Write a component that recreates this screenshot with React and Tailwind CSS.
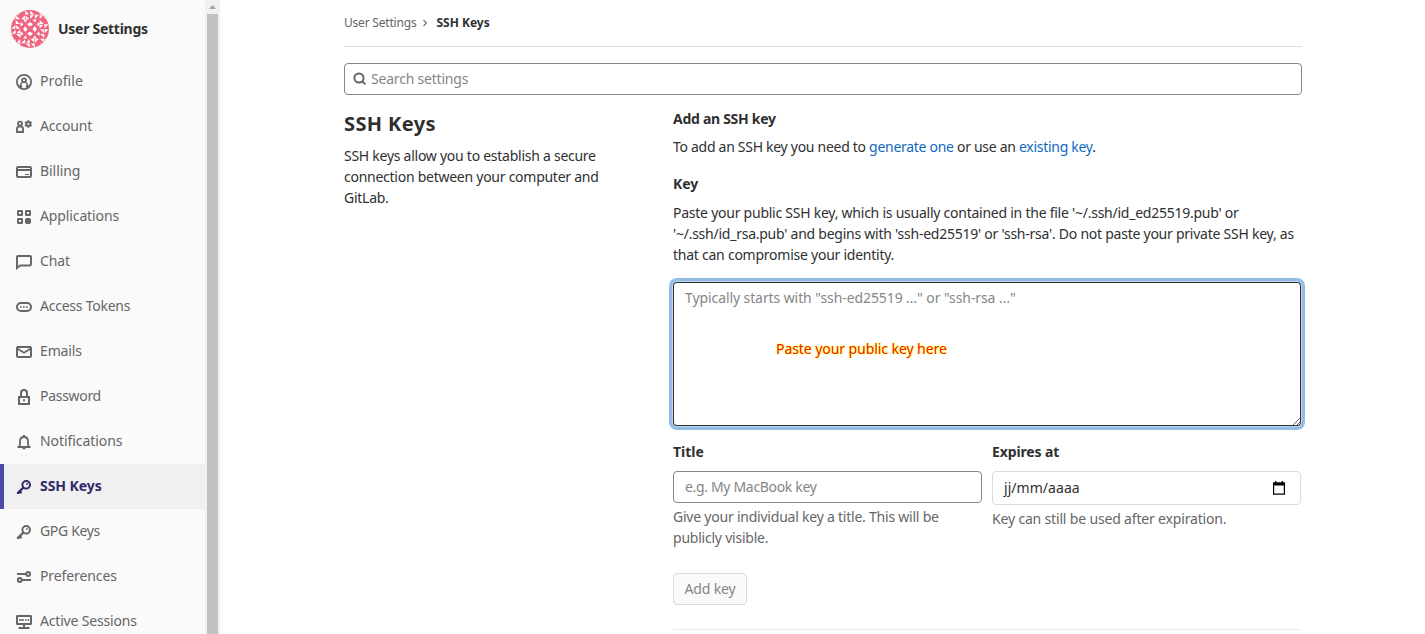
import React from 'react';

const stroke = { fill: 'none', stroke: 'currentColor', strokeWidth: 2 };

const icons = {
  profile: (
    <g {...stroke} strokeWidth="1.8">
      <circle cx="8" cy="8" r="7.1" />
      <circle cx="8" cy="6.3" r="1.9" />
      <path d="M3.7 13 4.6 10.4Q5.2 8.9 6.6 8.4M12.3 13 11.4 10.4Q10.8 8.9 9.4 8.4M5.4 13.6V11.3M10.6 13.6V11.3" strokeWidth="1.5" />
    </g>
  ),
  account: (
    <g {...stroke} strokeWidth="1.9">
      <circle cx="4" cy="4.6" r="2" />
      <path d="M1 13V9.8Q1 7.6 3.1 7.6H4.9Q7 7.6 7 9.8V13Z" />
      <circle cx="12.3" cy="5" r="2" />
      <path d="M12.3 1.2V3M12.3 7V8.8M9 3.1 10.6 4M14 6 15.6 6.9M9 6.9 10.6 6M14 4 15.6 3.1" />
    </g>
  ),
  billing: (
    <g {...stroke}>
      <rect x="1" y="3" width="14" height="10" rx="1.2" />
      <path d="M1 6H15" />
      <path d="M9 10.5H13" strokeWidth="1" />
    </g>
  ),
  applications: (
    <g {...stroke}>
      <rect x="2" y="2" width="4" height="4" rx=".3" />
      <rect x="10" y="2" width="4" height="4" rx=".3" />
      <rect x="2" y="10" width="4" height="4" rx=".3" />
      <rect x="10" y="10" width="4" height="4" rx=".8" fill="currentColor" />
    </g>
  ),
  chat: <path {...stroke} d="M1 14V3Q1 2 2 2H14Q15 2 15 3V10Q15 11 14 11.5H4.2Z" />,
  tokens: (
    <g {...stroke}>
      <rect x="1" y="4" width="14" height="8" rx="4" />
      <path d="M4 8H6M7 8H9M10 8H12" strokeWidth="1.7" strokeDasharray="1.7 1.3" />
    </g>
  ),
  emails: (
    <g {...stroke}>
      <rect x="1" y="3" width="14" height="10" rx="1" />
      <path d="M1.5 4.7 8 8.8 14.5 4.7" strokeWidth="1.8" />
    </g>
  ),
  password: (
    <g {...stroke}>
      <path d="M3 8H13V15H3ZM5 7.2V4Q5 1 8 1T11 4V7.2" />
      <path d="M7 11.3H9" />
    </g>
  ),
  notifications: (
    <g {...stroke} strokeWidth="1.8">
      <path d="M1.5 13H14.5M3.4 12.7Q4 11.5 4 7.4Q4 3 8 3T12 7.4Q12 11.5 12.6 12.7" />
      <path d="M8 1V3M6.5 14.3H9.5" strokeWidth="2" />
    </g>
  ),
  key: (
    <g {...stroke}>
      <circle cx="10.2" cy="5.8" r="3.8" />
      <path d="M7.6 8.4 2 13.8V15M4.7 11.2V13.3H2" strokeWidth="2.2" />
      <circle cx="11" cy="5" r=".9" fill="currentColor" stroke="none" />
    </g>
  ),
  preferences: (
    <g {...stroke}>
      <path d="M1 5H10M6 11H15" />
      <circle cx="12.2" cy="5" r="1.9" />
      <circle cx="3.8" cy="11" r="1.9" />
    </g>
  ),
  sessions: (
    <g {...stroke}>
      <rect x="1" y="2" width="14" height="8" rx=".3" />
      <path d="M3 6H8M9 6H10.7M11.5 6H13.2" strokeWidth="1.6" />
      <path d="M8 10V13.5M2.5 14H13.5" />
    </g>
  ),
};

const nav = [
  ['Profile', 'profile', 'tracking-[0.09px]'],
  ['Account', 'account', 'tracking-[-0.16px]'],
  ['Billing', 'billing', 'tracking-[-0.06px]'],
  ['Applications', 'applications', 'tracking-[-0.12px]'],
  ['Chat', 'chat', 'tracking-[-0.1px]'],
  ['Access Tokens', 'tokens', 'tracking-[-0.24px]'],
  ['Emails', 'emails', 'tracking-[-0.15px]'],
  ['Password', 'password', 'tracking-[-0.3px]'],
  ['Notifications', 'notifications', 'tracking-[-0.06px]'],
  ['SSH Keys', 'key', 'tracking-[-0.06px]'],
  ['GPG Keys', 'key', 'tracking-[-0.33px]'],
  ['Preferences', 'preferences', 'tracking-[-0.1px]'],
  ['Active Sessions', 'sessions', 'tracking-[-0.18px]'],
];

function Icon({ name }) {
  return (
    <svg viewBox="0 0 16 16" className="mt-px size-4 shrink-0">
      {icons[name]}
    </svg>
  );
}

// Geometric avatar: a 4x4 grid of patches clipped to a circle.
function Avatar() {
  const cells = [];
  for (let r = 0; r < 4; r++) {
    for (let c = 0; c < 4; c++) {
      const inner = r > 0 && r < 3 && c > 0 && c < 3;
      const turn = r < 2 ? (c < 2 ? 0 : 90) : c < 2 ? 270 : 180;
      cells.push(
        <g key={`${r}${c}`} transform={`translate(${c * 9.5} ${r * 9.5}) rotate(${inner ? 0 : turn} 4.75 4.75)`}>
          <path
            fill="#fff"
            d={
              inner
                ? 'M2.6 0H6.9L4.75 3ZM2.6 9.5H6.9L4.75 6.5ZM0 2.6V6.9L3 4.75ZM9.5 2.6V6.9L6.5 4.75Z'
                : 'M4.75 4.6V.6L8.8 4.6ZM.6 9.3 4.4 5.2V9.3ZM5.2 9.3V5.6L9 9.3Z'
            }
          />
        </g>
      );
    }
  }
  return (
    <svg viewBox="0 0 38 38" className="size-[38px] shrink-0 rounded-full bg-[#ef6480]">
      {cells}
    </svg>
  );
}

function Sidebar() {
  return (
    <aside className="flex h-full w-[220px] shrink-0">
      <div className="h-full min-w-0 flex-1 overflow-hidden bg-[#fafafa]">
        <div className="flex h-[59px] items-center gap-[9px] pb-px pl-[11px] text-sm font-bold">
          <Avatar />
          <span className="tracking-[-0.27px] whitespace-nowrap">User Settings</span>
        </div>
        <nav>
          {nav.map(([label, icon, tracking]) => {
            const active = label === 'SSH Keys';
            return (
              <a
                key={label}
                className={`flex h-[45px] items-center gap-2 border-l-4 pl-3 text-sm whitespace-nowrap ${
                  active ? 'border-[#4b4ba3] bg-[#f0f0f0] font-bold text-[#2f2a6b]' : 'border-transparent text-[#666]'
                }`}
              >
                <Icon name={icon} />
                <span className={`pb-px ${tracking}`}>{label}</span>
              </a>
            );
          })}
        </nav>
      </div>
      <div className="flex w-[15px] flex-col items-center bg-[#f1f1f1]">
        <svg viewBox="0 0 15 14" className="h-3.5 w-[15px] shrink-0">
          <path d="M4 9 7.5 5 11 9Z" fill="#a3a3a3" />
        </svg>
        <div className="w-[11px] flex-1 bg-[#c1c1c1]" />
      </div>
    </aside>
  );
}

export default function App() {
  return (
    <div className="flex h-[634px] w-[1425px] overflow-hidden bg-white font-['Noto_Sans',sans-serif] text-sm leading-[21px] text-[#303030]">
      <Sidebar />
      <main className="ml-[124px] w-[958px]">
        <div className="flex h-[47px] items-center border-b border-[#dbdbdb] pb-px text-xs">
          <span className="tracking-[-0.2px] text-[#666]">User Settings</span>
          <svg viewBox="0 0 8 8" className="mx-[5px] size-2 fill-none stroke-[#777]">
            <path d="M2.5 1 5.5 4 2.5 7" strokeWidth="1.2" />
          </svg>
          <span className="ml-[2px] font-bold">SSH Keys</span>
        </div>

        <div className="mt-4 flex h-8 items-center rounded border border-[#868686] pl-[7px]">
          <svg viewBox="0 0 16 16" className="size-4 fill-none stroke-[#666]">
            <circle cx="7" cy="7" r="4.6" strokeWidth="2" />
            <path d="M10.2 10.2 13.4 13.4" strokeWidth="2" />
          </svg>
          <span className="ml-[3px] pb-px tracking-[-0.2px] text-[#868686]">Search settings</span>
        </div>

        <div className="flex">
          <section className="w-[329px] pt-[17px]">
            <h4 className="text-xl leading-6 font-bold tracking-[0.38px]">SSH Keys</h4>
            <p className="mt-[9px] tracking-[-0.26px] whitespace-nowrap">
              SSH keys allow you to establish a secure
              <br />
              connection between your computer and
              <br />
              GitLab.
            </p>
          </section>

          <section className="w-[628px] pt-[13px]">
            <h5 className="font-bold tracking-[-0.28px]">Add an SSH key</h5>
            <p className="mt-[7px] tracking-[-0.29px]">
              To add an SSH key you need to <a className="text-[#1068bf]">generate one</a> or use an{' '}
              <a className="text-[#1068bf]">existing key</a>.
            </p>
            <label className="mt-4 block font-bold">Key</label>
            <p className="mt-2 tracking-[-0.245px] whitespace-nowrap">
              Paste your public SSH key, which is usually contained in the file '~/.ssh/id_ed25519.pub' or
              <br />
              '~/.ssh/id_rsa.pub' and begins with 'ssh-ed25519' or 'ssh-rsa'. Do not paste your private SSH key, as
              <br />
              that can compromise your identity.
            </p>
            <div className="relative mt-[17px] h-36">
              <textarea
                className="block h-36 w-full rounded px-3 py-[5px] tracking-[-0.09px] shadow-[inset_0_0_0_1px_#303030,0_0_0_1px_rgba(255,255,255,.4),0_0_0_4px_rgba(31,117,203,.48)] outline-none placeholder:text-[#868686]"
                placeholder={'Typically starts with "ssh-ed25519 …" or "ssh-rsa …"'}
              />
              <span className="absolute top-14 left-[103px] tracking-[-0.07px] whitespace-nowrap text-[#f02018] [text-shadow:0_0_2px_#ff0,0_0_1px_#ff0]">
                Paste your public key here
              </span>
            </div>

            <div className="mt-[15px] flex gap-2.5">
              <div className="w-[309px]">
                <label className="block font-bold">Title</label>
                <div className="mt-[9px] flex h-8 items-center rounded border border-[#868686] pb-px pl-[11px] text-[#868686]">
                  <span className="tracking-[-0.33px]">e.g. My MacBook key</span>
                </div>
                <p className="mt-[3px] tracking-[-0.225px] whitespace-nowrap text-[#666]">
                  Give your individual key a title. This will be
                  <br />
                  publicly visible.
                </p>
              </div>
              <div className="w-[309px]">
                <label className="block font-bold tracking-[-0.13px]">Expires at</label>
                <div className="mt-[9px] flex h-[34px] items-center justify-between rounded border border-[#dbdbdb] pr-[13px] pl-[11px]">
                  <span className="pb-px tracking-[0.05px]">jj/mm/aaaa</span>
                  <svg viewBox="0 0 16 16" className="size-4">
                    <path d="M2.6 3H13.4V14.2H2.6Z" fill="none" stroke="#000" strokeWidth="1.2" />
                    <path d="M2 2.4H14V5.4H2ZM4 1H5.3V3H4ZM10.7 1H12V3H10.7Z" />
                  </svg>
                </div>
                <p className="mt-[3px] tracking-[-0.17px] whitespace-nowrap text-[#666]">Key can still be used after expiration.</p>
              </div>
            </div>

            <button className="mt-[25px] flex h-8 w-[74px] items-center justify-center rounded border border-[#dbdbdb] bg-[#fafafa] pb-px whitespace-nowrap text-[#868686]">
              <span className="tracking-[-0.14px]">Add key</span>
            </button>
            <div className="mt-6 h-px bg-[#eaeaea]" />
          </section>
        </div>
      </main>
    </div>
  );
}
